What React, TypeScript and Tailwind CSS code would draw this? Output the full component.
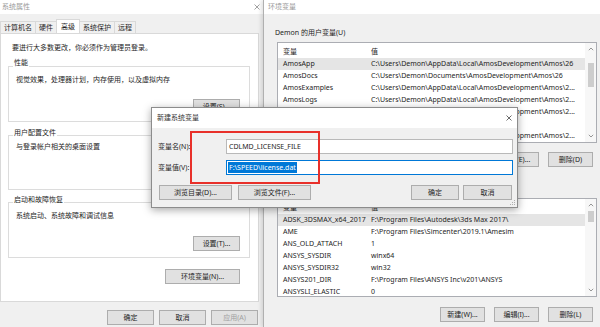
import React from "react";

//用户变量
const userVars = [
  { name: "AmosApp", value: "C:\\Users\\Demon\\AppData\\Local\\AmosDevelopment\\Amos\\26", active: true },
  { name: "AmosDocs", value: "C:\\Users\\Demon\\Documents\\AmosDevelopment\\Amos\\26" },
  { name: "AmosExamples", value: "C:\\Users\\Demon\\AppData\\Local\\AmosDevelopment\\Amos\\2..." },
  { name: "AmosLogs", value: "C:\\Users\\Demon\\AppData\\Local\\AmosDevelopment\\Amos\\2..." },
  { name: "AmosOutput", value: "C:\\Users\\Demon\\AppData\\Local\\AmosDevelopment\\Amos\\2..." },
  { name: "OneDrive", value: "C:\\Users\\Demon\\OneDrive" },
  { name: "AmosTemp", value: "C:\\Users\\Demon\\AppData\\Local\\AmosDevelopment\\Amos\\2..." },
];

//系统变量
const sysVars = [
  { name: "ADSK_3DSMAX_x64_2017", value: "F:\\Program Files\\Autodesk\\3ds Max 2017\\", active: true },
  { name: "AME", value: "F:\\Program Files\\Simcenter\\2019.1\\Amesim" },
  { name: "ANS_OLD_ATTACH", value: "1" },
  { name: "ANSYS_SYSDIR", value: "winx64" },
  { name: "ANSYS_SYSDIR32", value: "win32" },
  { name: "ANSYS201_DIR", value: "F:\\Program Files\\ANSYS Inc\\v201\\ANSYS" },
  { name: "ANSYSLI_ELASTIC", value: "0" },
];

const Btn = ({
  label,
  w = "w-[47px]",
  className = "",
}: {
  label: string;
  w?: string;
  className?: string;
}) => (
  <div
    className={`${w} h-[15px] shrink-0 flex items-center justify-center bg-[#e1e1e1] border border-[#adadad] ${className}`}
  >
    {label}
  </div>
);

const CloseIcon = ({ color = "#8a8a8a" }: { color?: string }) => (
  <svg width="6" height="6" viewBox="0 0 6 6">
    <path d="M0.5 0.5L5.5 5.5M5.5 0.5L0.5 5.5" stroke={color} strokeWidth="0.8" />
  </svg>
);

const Chevron = ({ up }: { up?: boolean }) => (
  <svg width="6" height="4" viewBox="0 0 6 4">
    <path
      d={up ? "M0.8 3.2L3 1L5.2 3.2" : "M0.8 0.8L3 3L5.2 0.8"}
      stroke="#8a8a8a"
      strokeWidth="0.9"
      fill="none"
    />
  </svg>
);

const Group = ({
  title,
  text,
  button,
  labelMt,
  textMt,
  btnMt,
  pb,
  mt,
}: {
  title: string;
  text: string;
  button: string;
  labelMt: string;
  textMt: string;
  btnMt: string;
  pb: string;
  mt: string;
}) => (
  <div className={`${mt} ${pb} ml-[7px] w-[242px] border border-[#dcdcdc] flex flex-col`}>
    <span className={`${labelMt} ml-[4px] px-[1px] w-fit bg-white leading-[10px]`}>{title}</span>
    <p className={`${textMt} pl-[7px] leading-[10px]`}>{text}</p>
    <Btn label={button} className={`${btnMt} self-end mr-[9px]`} />
  </div>
);

const VarList = ({
  rows,
  height,
  thumbMt,
  thumbH,
}: {
  rows: { name: string; value: string; active?: boolean }[];
  height: string;
  thumbMt: string;
  thumbH: string;
}) => (
  <div className={`ml-[13px] w-[320px] ${height} bg-white border border-[#abadb3] flex overflow-hidden`}>
    <div className="flex-1 pt-[3px] overflow-hidden">
      <div className="flex h-[12px] items-center">
        <span className="w-[93px] pl-[5px]">变量</span>
        <span>值</span>
      </div>
      {rows.map((r) => (
        <div
          key={r.name}
          className={`flex h-[12px] items-center whitespace-nowrap ${r.active ? "bg-[#e5e5e5]" : ""}`}
        >
          <span className="w-[93px] shrink-0 pl-[5px]">{r.name}</span>
          <span>{r.value}</span>
        </div>
      ))}
    </div>
    <div className="w-[11px] bg-[#f7f7f7] flex flex-col items-center">
      <div className="h-[12px] flex items-center justify-center">
        <Chevron up />
      </div>
      <div className="flex-1">
        <div className={`${thumbMt} ${thumbH} w-[6px] bg-[#cdcdcd]`} />
      </div>
      <div className="h-[12px] flex items-center justify-center">
        <Chevron />
      </div>
    </div>
  </div>
);

const SystemProperties = () => (
  <div className="absolute left-0 top-0 w-[270px] h-[327px] bg-[#f0f0f0] flex flex-col">
    <div className="h-[14px] bg-white flex items-center justify-between pl-[2px] pr-[10px] text-[#9a9a9a]">
      <span>系统属性</span>
      <CloseIcon />
    </div>
    <div className="h-[19px] flex items-end">
      {["计算机名", "硬件", "高级", "系统保护", "远程"].map((t) => (
        <div
          key={t}
          className={`px-[3px] flex items-center border border-b-0 border-[#d9d9d9] -mr-px ${
            t === "高级" ? "h-[14px] bg-white px-[4px] relative" : "h-[12px]"
          }`}
        >
          {t}
        </div>
      ))}
    </div>
    <div className="w-[259px] h-[269px] bg-white border border-[#d9d9d9] flex flex-col">
      <p className="mt-[9px] pl-[11px] leading-[10px]">要进行大多数更改，你必须作为管理员登录。</p>
      <Group
        title="性能"
        text="视觉效果，处理器计划，内存使用，以及虚拟内存"
        button="设置(S)..."
        mt="mt-[13px]"
        labelMt="-mt-[9px]"
        textMt="mt-[7px]"
        btnMt="mt-[14px]"
        pb="pb-[7px]"
      />
      <Group
        title="用户配置文件"
        text="与登录帐户相关的桌面设置"
        button="设置(E)..."
        mt="mt-[13px]"
        labelMt="-mt-[8px]"
        textMt="mt-[4px]"
        btnMt="mt-[15px]"
        pb="pb-[7px]"
      />
      <Group
        title="启动和故障恢复"
        text="系统启动、系统故障和调试信息"
        button="设置(T)..."
        mt="mt-[12px]"
        labelMt="-mt-[8px]"
        textMt="mt-[6px]"
        btnMt="mt-[15px]"
        pb="pb-[6px]"
      />
      <Btn label="环境变量(N)..." w="w-[75px]" className="mt-[11px] self-end mr-[18px]" />
    </div>
    <div className="flex gap-[5px] pt-[8px] pl-[107px]">
      <Btn label="确定" />
      <Btn label="取消" />
      <Btn label="应用(A)" className="text-[#a0a0a0]" />
    </div>
  </div>
);

const EnvVariables = () => (
  <div className="absolute left-[263px] top-0 w-[345px] h-[327px] bg-[#f0f0f0] border-l border-[#b0b0b0] shadow-[-2px_0_4px_rgba(0,0,0,0.12)] flex flex-col">
    <div className="h-[14px] shrink-0 bg-white flex items-center pl-[4px] text-[#9a9a9a]">环境变量</div>
    <p className="mt-[14px] pl-[11px] leading-[10px]">Demon 的用户变量(U)</p>
    <div className="mt-[4px]">
      <VarList rows={userVars} height="h-[101px]" thumbMt="mt-[8px]" thumbH="h-[24px]" />
    </div>
    <div className="mt-[9px] ml-[13px] w-[320px] flex justify-end gap-[9px] pr-[4px]">
      <Btn label="新建(N)..." w="w-[45px]" />
      <Btn label="编辑(E)..." w="w-[45px]" />
      <Btn label="删除(D)" w="w-[45px]" />
    </div>
    {/* 系统变量标题被对话框遮住 */}
    <div className="mt-[31px]">
      <VarList rows={sysVars} height="h-[99px]" thumbMt="mt-0" thumbH="h-[11px]" />
    </div>
    <div className="mt-[10px] ml-[13px] w-[320px] flex justify-end gap-[9px] pr-[4px]">
      <Btn label="新建(W)..." w="w-[45px]" />
      <Btn label="编辑(I)..." w="w-[45px]" />
      <Btn label="删除(L)" w="w-[45px]" />
    </div>
  </div>
);

const NewVariableDialog = () => (
  <div className="absolute left-[151px] top-[107px] w-[367px] h-[101px] bg-[#f0f0f0] border border-[#8c8c8c] shadow-[0_2px_8px_rgba(0,0,0,0.35)] flex flex-col">
    <div className="h-[20px] bg-white flex items-center justify-between pl-[5px] pr-[5px] text-[#333]">
      <span>新建系统变量</span>
      <CloseIcon color="#444" />
    </div>
    <div className="pt-[11px] flex flex-col">
      <div className="flex items-center">
        <span className="w-[74px] pl-[6px]">变量名(N):</span>
        <div className="w-[287px] h-[15px] bg-white border border-[#b9b9b9] flex items-center pl-[2px]">
          CDLMD_LICENSE_FILE
        </div>
      </div>
      <div className="mt-[6px] flex items-center">
        <span className="w-[74px] pl-[6px]">变量值(V):</span>
        <div className="w-[287px] h-[15px] bg-white border border-[#0078d7] flex items-center pl-[1px]">
          <span className="bg-[#0078d7] text-white leading-[11px] px-[1px]">F:\SPEED\license.dat</span>
        </div>
      </div>
      <div className="mt-[10px] flex items-center pl-[7px] pr-[5px]">
        <Btn label="浏览目录(D)..." w="w-[73px]" />
        <Btn label="浏览文件(F)..." w="w-[73px]" className="ml-[6px]" />
        <Btn label="确定" w="w-[48px]" className="ml-auto border-[#0078d7]" />
        <Btn label="取消" w="w-[49px]" className="ml-[4px]" />
      </div>
    </div>
    <svg className="absolute right-[1px] bottom-[1px]" width="6" height="6" viewBox="0 0 6 6">
      <rect x="4" y="0" width="1" height="1" fill="#b0b0b0" />
      <rect x="2" y="2" width="1" height="1" fill="#b0b0b0" />
      <rect x="4" y="2" width="1" height="1" fill="#b0b0b0" />
      <rect x="0" y="4" width="1" height="1" fill="#b0b0b0" />
      <rect x="2" y="4" width="1" height="1" fill="#b0b0b0" />
      <rect x="4" y="4" width="1" height="1" fill="#b0b0b0" />
    </svg>
  </div>
);

export default function App() {
  return (
    <div className="relative w-[600px] h-[327px] overflow-hidden bg-[#f0f0f0] font-['Noto_Sans','Noto_Sans_CJK_SC',sans-serif] text-[7px] leading-[10px] text-[#1e1e1e]">
      <SystemProperties />
      <EnvVariables />
      <NewVariableDialog />
      {/* 红色标注框 */}
      <div className="absolute left-[190px] top-[131px] w-[130px] h-[53px] border-2 border-[#e8302a]" />
    </div>
  );
}
